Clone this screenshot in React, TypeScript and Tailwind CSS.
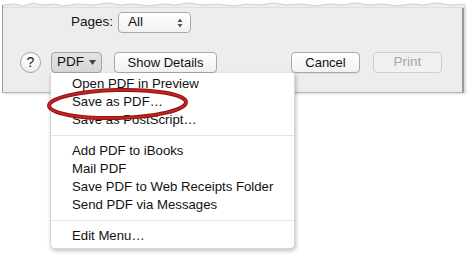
import React from "react";

const font = { fontFamily: '"Liberation Sans", Arial, sans-serif' };

function Btn({ children, className = "" }: { children: React.ReactNode; className?: string }) {
  return (
    <div
      className={
        "h-[21px] flex items-center justify-center rounded-[4px] border border-[#a9a9a9] bg-gradient-to-b from-white to-[#f1f1f1] text-[13px] text-[#111] shadow-[0_1px_0_rgba(0,0,0,0.06)] " +
        className
      }
    >
      {children}
    </div>
  );
}

export default function App() {
  const items1 = ["Open PDF in Preview", "Save as PDF…", "Save as PostScript…"];
  const items2 = ["Add PDF to iBooks", "Mail PDF", "Save PDF to Web Receipts Folder", "Send PDF via Messages"];
  return (
    <div className="relative w-[473px] h-[259px] bg-white overflow-hidden" style={font}>
      {/* panel */}
      <div className="relative ml-[2px] mt-[5px] w-[462px] h-[88px] bg-[#ededed] border-l border-[#9d9d9d] border-r-2 border-r-[#9a9a9a] border-b border-b-[#b5b5b5] shadow-[2px_1px_2px_rgba(0,0,0,0.15)]">
        <svg className="absolute left-0 top-[-3px]" width="462" height="6" viewBox="0 0 462 6">
          <path
            d="M0 3 L12 2 L20 4 L30 1 L40 3 L52 2 L60 4 L75 2 L90 3 L104 1 L118 3 L130 2 L146 4 L160 2 L172 3 L186 1 L200 3 L214 2 L230 4 L244 2 L256 3 L270 1 L284 3 L300 2 L312 4 L326 2 L340 3 L352 1 L366 3 L380 2 L394 4 L408 2 L420 3 L434 1 L448 3 L462 2 L462 6 L0 6 Z"
            fill="#ededed"
            stroke="#cfcfcf"
            strokeWidth="1"
          />
        </svg>
        <div className="flex flex-col pt-[7px]">
          <div className="flex items-center h-[21px] pl-[68px] gap-[5px]">
            <span className="text-[13.5px] text-[#111]">Pages:</span>
            <div className="h-[21px] w-[73px] flex items-center justify-between pl-[9px] pr-[7px] rounded-[4px] border border-[#a9a9a9] bg-gradient-to-b from-white to-[#f1f1f1] text-[13.5px] text-[#111]">
              <span>All</span>
              <svg width="6" height="10" viewBox="0 0 6 10">
                <path d="M0.5 4 L3 0.5 L5.5 4 Z M0.5 6 L3 9.5 L5.5 6 Z" fill="#555" />
              </svg>
            </div>
          </div>
          <div className="flex items-center h-[21px] mt-[19px] pl-[17px]">
            <div className="w-[21px] h-[21px] rounded-full border border-[#9e9e9e] bg-gradient-to-b from-white to-[#efefef] flex items-center justify-center text-[14px] text-[#222]">
              ?
            </div>
            <div className="ml-[10px] w-[51px] h-[21px] rounded-[4px] border border-[#a3a3a3] bg-gradient-to-b from-[#e3e3e3] to-[#d6d6d6] flex items-center justify-center gap-[5px] text-[13.5px] text-[#111]">
              <span>PDF</span>
              <svg width="7" height="5" viewBox="0 0 7 5">
                <path d="M0 0 L7 0 L3.5 5 Z" fill="#444" />
              </svg>
            </div>
            <Btn className="ml-[12px] w-[103px] text-[13.5px]">Show Details</Btn>
            <Btn className="ml-[74px] w-[69px] text-[13.5px]">Cancel</Btn>
            <div className="ml-[13px] w-[69px] h-[21px] flex items-center justify-center rounded-[4px] border border-[#cdcdcd] bg-[#f1f1f1] text-[13.5px] text-[#a6a6a6]">
              Print
            </div>
          </div>
        </div>
      </div>

      {/* menu */}
      <div className="absolute left-[50px] top-[73px] w-[245px] bg-white rounded-b-[5px] border border-t-0 border-[#d6d6d6] shadow-[1px_2px_4px_rgba(0,0,0,0.25)] pt-[2px] pb-[3px] text-[13.2px] text-[#111]">
        {items1.map((t) => (
          <div key={t} className="h-[18px] leading-[18px] pl-[21px]">
            {t}
          </div>
        ))}
        <div className="my-[6px] h-px bg-[#e3e3e3]" />
        {items2.map((t) => (
          <div key={t} className="h-[18px] leading-[18px] pl-[21px]">
            {t}
          </div>
        ))}
        <div className="my-[6px] h-px bg-[#e3e3e3]" />
        <div className="h-[18px] leading-[18px] pl-[21px]">Edit Menu…</div>
      </div>

      {/* annotation ellipse */}
      <svg className="absolute left-0 top-0 pointer-events-none" width="473" height="259">
        <ellipse cx="117.5" cy="104" rx="68.5" ry="14" fill="none" stroke="#9a1414" strokeWidth="4" transform="rotate(-1.5 117.5 104)" />
        <ellipse cx="117.5" cy="104" rx="68.5" ry="14" fill="none" stroke="#c62828" strokeWidth="1.5" transform="rotate(-1.5 117.5 104)" />
      </svg>
    </div>
  );
}
